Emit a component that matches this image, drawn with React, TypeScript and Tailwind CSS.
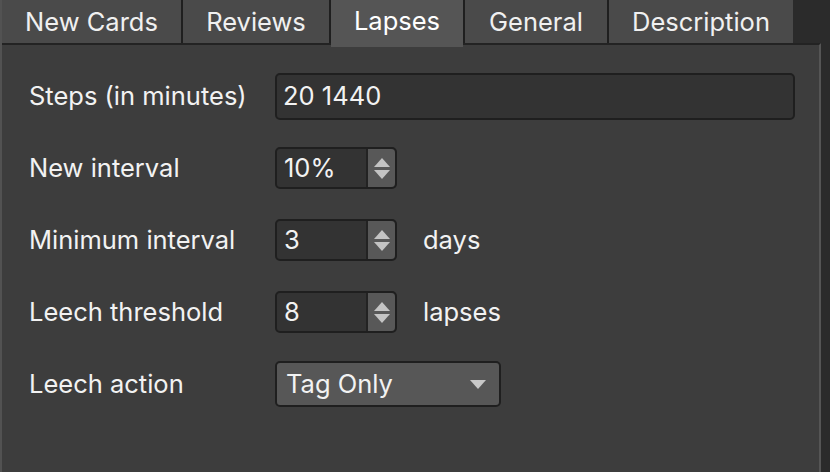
import React from "react";

const font = { fontFamily: "Inter, 'Noto Sans', sans-serif" };

function Sep() {
  return <div className="w-[2px] h-[43px] bg-[#1f1f1f] shrink-0" />;
}

function Tab({ label, w, selected }: { label: string; w: string; selected?: boolean }) {
  return (
    <div
      className={
        selected
          ? `${w} shrink-0 h-[47px] bg-[#555555] flex items-start justify-center pt-[5px] text-[#ffffff] relative z-10`
          : `${w} shrink-0 h-[43px] bg-[#4a4a4a] flex items-start justify-center pt-[6px] text-[#f0f0f0]`
      }
    >
      <span className="text-[25.5px] leading-[31px]">{label}</span>
    </div>
  );
}

function Arrows() {
  return (
    <div className="w-[29px] h-full bg-[#585858] border-l-2 border-[#232323] flex flex-col items-center justify-center gap-[3px] rounded-r-[4px]">
      <svg width="16" height="9" viewBox="0 0 16 9">
        <polygon points="8,0 16,9 0,9" fill="#c4c4c4" />
      </svg>
      <svg width="16" height="9" viewBox="0 0 16 9">
        <polygon points="0,0 16,0 8,9" fill="#c4c4c4" />
      </svg>
    </div>
  );
}

function Spin({ value }: { value: string }) {
  return (
    <div className="w-[122px] h-[42px] rounded-[5px] border-2 border-[#1f1f1f] bg-[#333333] flex items-stretch">
      <div className="flex-1 flex items-center pl-[7px] text-[25.5px] text-[#f2f2f2]">{value}</div>
      <Arrows />
    </div>
  );
}

function Row({ label, children }: { label: string; children: React.ReactNode }) {
  return (
    <div className="h-[72px] flex items-center">
      <div className="w-[246px] text-[25.5px] text-[#f2f2f2]">{label}</div>
      {children}
    </div>
  );
}

export default function App() {
  return (
    <div className="w-[830px] h-[472px] bg-[#2b2b2b] overflow-hidden" style={font}>
      <div className="flex h-[45px] items-start">
        <div className="w-[2px] h-[45px] bg-[#525252] shrink-0" />
        <Tab label="New Cards" w="w-[179px]" />
        <Sep />
        <Tab label="Reviews" w="w-[146px]" />
        <Sep />
        <Tab label="Lapses" w="w-[132px]" selected />
        <Sep />
        <Tab label="General" w="w-[142px]" />
        <Sep />
        <Tab label="Description" w="w-[184px]" />
      </div>
      <div className="-mt-[2px] w-[821px] h-[429px] bg-[#3d3d3d] border-t-2 border-t-[#232323] border-l-2 border-l-[#525252] border-r-2 border-r-[#555555] pl-[27px] pt-[15px]">
        <Row label="Steps (in minutes)">
          <div className="w-[520px] h-[47px] rounded-[5px] border-2 border-[#1f1f1f] bg-[#333333] flex items-center pl-[6px] text-[25.5px] text-[#f2f2f2]">
            20 1440
          </div>
        </Row>
        <Row label="New interval">
          <Spin value="10%" />
        </Row>
        <Row label="Minimum interval">
          <Spin value="3" />
          <span className="ml-[26px] text-[25.5px] text-[#f2f2f2]">days</span>
        </Row>
        <Row label="Leech threshold">
          <Spin value="8" />
          <span className="ml-[26px] text-[25.5px] text-[#f2f2f2]">lapses</span>
        </Row>
        <Row label="Leech action">
          <div className="w-[226px] h-[46px] rounded-[5px] border-2 border-[#1f1f1f] bg-[#575757] flex items-center pl-[9px] pr-[13px] text-[25.5px] text-[#f2f2f2]">
            <span className="flex-1">Tag Only</span>
            <svg width="16" height="9" viewBox="0 0 16 9">
              <polygon points="0,0 16,0 8,9" fill="#c8c8c8" />
            </svg>
          </div>
        </Row>
      </div>
    </div>
  );
}
